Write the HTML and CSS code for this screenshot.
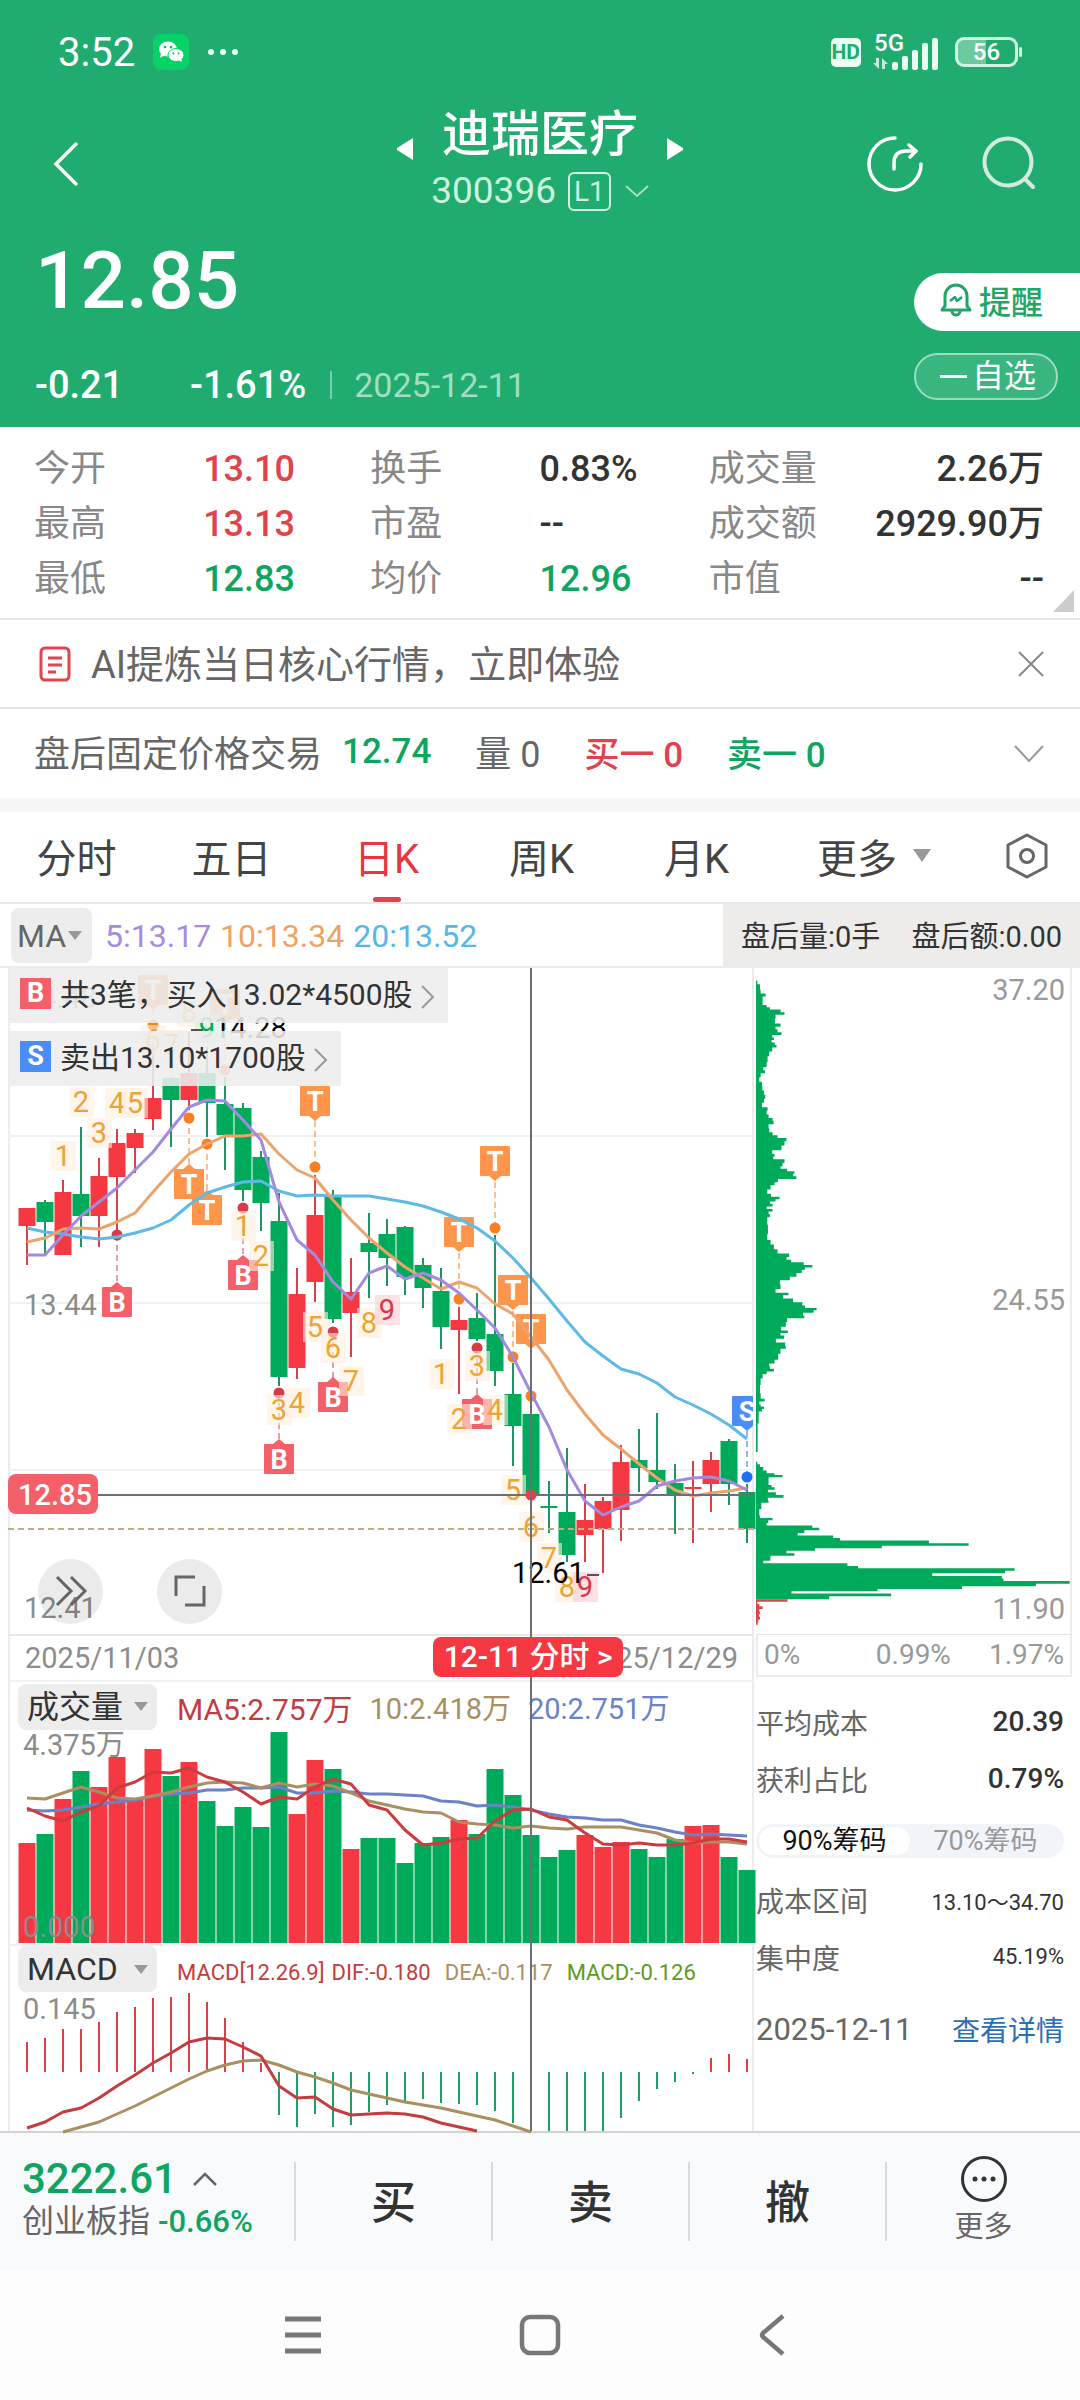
FILE: index.html
```
<!DOCTYPE html>
<html lang="zh-CN">
<head>
    <meta charset="UTF-8" />
    <meta name="viewport" content="width=device-width, initial-scale=1.0" />
    <title>迪瑞医疗 300396</title>
    <link rel="stylesheet" href="styles.css">
</head>
<body>
    <header class="top">
        <div class="status">
            <span class="clock">3:52</span>
            <svg class="wechat" width="36" height="36" viewBox="0 0 36 36">
                <rect width="36" height="36" rx="8" fill="#07d267"/>
                <ellipse cx="15" cy="15" rx="9" ry="7.500" fill="#fff"/>
                <path d="M8 19l-1 5 5-3z" fill="#fff"/>
                <ellipse cx="23" cy="21" rx="8" ry="6.500" fill="#fff" stroke="#07d267"/>
                <path d="M25 26l4 2-1-4z" fill="#fff"/>
                <g fill="#07c15f"><circle cx="12" cy="13" r="1.300"/><circle cx="18" cy="13" r="1.300"/><circle cx="20.500" cy="19.500" r="1"/><circle cx="25.500" cy="19.500" r="1"/></g>
            </svg>
            <svg width="34" height="8" viewBox="0 0 34 8" fill="#e8fff2"><circle cx="4" cy="4" r="3"/><circle cx="16" cy="4" r="3"/><circle cx="28" cy="4" r="3"/></svg>
            <span class="hd">HD</span>
            <div class="signal">
                <span>5G</span>
                <svg width="68" height="36" viewBox="0 0 68 36" fill="#e8fff2">
                    <path d="M3 24h3v11L0 29h3zM9 35V24l6 6h-3v5z" opacity=".8"/>
                    <rect x="19" y="28" width="6" height="8" rx="2"/><rect x="29" y="22" width="6" height="14" rx="2"/><rect x="39" y="16" width="6" height="20" rx="2"/><rect x="49" y="9" width="6" height="27" rx="2"/><rect x="59" y="4" width="6" height="32" rx="2"/>
                </svg>
            </div>
            <span class="battery">56</span>
        </div>

        <div class="title-bar">
            <button class="icon-btn back" aria-label="返回">
                <svg width="26" height="44" viewBox="0 0 26 44"><path d="M24 2L4 22l20 20" fill="none" stroke="#fff" stroke-width="3.500" stroke-linecap="round"/></svg>
            </button>
            <div class="stock">
                <button class="icon-btn" aria-label="上一只"><svg width="18" height="24" viewBox="0 0 18 24"><path d="M17 1v22L1 13v-2z" fill="#fff"/></svg></button>
                <div class="stock-name">
                    <h1>迪瑞医疗</h1>
                    <p>300396 <span class="level">L1</span>
                        <svg width="24" height="12" viewBox="0 0 24 12"><path d="M1 1l11 10L23 1" fill="none" stroke="#a6dfc2" stroke-width="2"/></svg>
                    </p>
                </div>
                <button class="icon-btn" aria-label="下一只"><svg width="18" height="24" viewBox="0 0 18 24"><path d="M1 1v22l16-10v-2z" fill="#fff"/></svg></button>
            </div>
            <div class="tools">
                <button class="icon-btn" aria-label="分享">
                    <svg width="56" height="56" viewBox="0 0 56 56" fill="none" stroke="#fff" stroke-width="3.500" stroke-linecap="round" stroke-linejoin="round"><path d="M27 2A26 26 0 1 0 53 28"/><path d="M26 33V27c0-8 4-12 12-12h10"/><path d="M41 9l7 6-6 6"/></svg>
                </button>
                <button class="icon-btn" aria-label="搜索">
                    <svg width="54" height="54" viewBox="0 0 54 54" fill="none" stroke="#d3ebdd" stroke-width="4" stroke-linecap="round"><circle cx="26" cy="26" r="23.500"/><path d="M43 43l8 8"/></svg>
                </button>
            </div>
        </div>

        <div class="quote">
            <div>
                <div class="price">12.85</div>
                <div class="change">
                    <span class="diff">-0.21</span>
                    <span class="pct">-1.61%</span>
                    <span class="day">2025-12-11</span>
                </div>
            </div>
            <div class="quote-btns">
                <button class="remind">
                    <svg width="32" height="34" viewBox="0 0 32 34" fill="none" stroke="#21a669" stroke-width="3" stroke-linejoin="round"><path d="M2 27h28l-3-4V13a11 11 0 0 0-22 0v10z"/><path d="M10 18l5-4 2 4 5-4" stroke-width="2.500"/><path d="M12 28a4 4 0 0 0 8 0" /></svg>提醒
                </button>
                <button class="watch"><i></i>自选</button>
            </div>
        </div>
    </header>

    <dl class="stats">
        <dt>今开</dt><dd class="red">13.10</dd><dt>换手</dt><dd>0.83%</dd><dt>成交量</dt><dd class="end">2.26万</dd>
        <dt>最高</dt><dd class="red">13.13</dd><dt>市盈</dt><dd>--</dd><dt>成交额</dt><dd class="end">2929.90万</dd>
        <dt>最低</dt><dd class="green">12.83</dd><dt>均价</dt><dd class="green">12.96</dd><dt>市值</dt><dd class="end">--</dd>
    </dl>

    <div class="ai-row">
        <svg width="32" height="36" viewBox="0 0 32 36" fill="none" stroke="#e0444e" stroke-width="3"><rect x="2" y="2" width="28" height="32" rx="4"/><path d="M9 12h14M9 19h14M9 26h8"/></svg>
        <span>AI提炼当日核心行情，立即体验</span>
        <button class="icon-btn" aria-label="关闭"><svg width="26" height="26" viewBox="0 0 26 26"><path d="M1 1l24 24M25 1L1 25" stroke="#888" stroke-width="2"/></svg></button>
    </div>

    <div class="fixed-row">
        <span>盘后固定价格交易</span>
        <b class="green">12.74</b>
        <span class="vol">量 0</span>
        <b class="red">买一 0</b>
        <b class="green">卖一 0</b>
        <button class="icon-btn" aria-label="展开"><svg width="30" height="18" viewBox="0 0 30 18"><path d="M1 1l14 15L29 1" fill="none" stroke="#999" stroke-width="2"/></svg></button>
    </div>

    <nav class="tabs">
        <button>分时</button>
        <button>五日</button>
        <button class="active">日K</button>
        <button>周K</button>
        <button>月K</button>
        <button class="more">更多<i class="caret"></i></button>
        <button class="setting" aria-label="设置">
            <svg width="42" height="46" viewBox="0 0 42 46" fill="none" stroke="#666" stroke-width="3" stroke-linejoin="round"><path d="M21 2l19 10v22L21 44 2 34V12z"/><circle cx="21" cy="23" r="6.500"/></svg>
        </button>
    </nav>

    <div class="ma-row">
        <button class="pick ma-pick">MA<i class="caret small"></i></button>
        <span class="ma5">5:13.17</span>
        <span class="ma10">10:13.34</span>
        <span class="ma20">20:13.52</span>
        <div class="after"><span>盘后量:0手</span><span>盘后额:0.00</span></div>
    </div>

    <main class="charts">
        <section class="left">
            <div class="kline">
                <svg id="kline" viewBox="8 968 746 712"></svg>
                <div class="trades">
                    <a href="#buy"><i class="tag b">B</i>共3笔，买入13.02*4500股<svg width="14" height="24" viewBox="0 0 14 24"><path d="M1 1l11 11L1 23" fill="none" stroke="#999" stroke-width="2"/></svg></a>
                    <a href="#sell"><i class="tag s">S</i>卖出13.10*1700股<svg width="14" height="24" viewBox="0 0 14 24"><path d="M1 1l11 11L1 23" fill="none" stroke="#999" stroke-width="2"/></svg></a>
                </div>
                <button class="round forward" aria-label="快进"><svg width="32" height="32" viewBox="0 0 32 32"><path d="M3 2l14 14L3 30M17 2l14 14-14 14" fill="none" stroke="#666" stroke-width="3"/></svg></button>
                <button class="round expand" aria-label="全屏"><svg width="32" height="32" viewBox="0 0 32 32"><path d="M2 21V2h19M30 11v19H11" fill="none" stroke="#666" stroke-width="3"/></svg></button>
                <button class="time-pill">12-11 分时 &gt;</button>
            </div>
            <div class="sub-head">
                <button class="pick">成交量<i class="caret small"></i></button>
                <p class="vol-ma"><span>MA5:2.757万</span><span>10:2.418万</span><span>20:2.751万</span></p>
            </div>
            <svg id="volume" viewBox="8 1731 746 213"></svg>
            <div class="sub-head macd-head">
                <button class="pick">MACD<i class="caret small"></i></button>
                <p class="macd-val"><span>MACD[12.26.9]</span><span>DIF:-0.180</span><span>DEA:-0.117</span><span>MACD:-0.126</span></p>
            </div>
            <svg id="macd" viewBox="8 1992 746 139"></svg>
            <div class="crosshair"></div>
        </section>

        <aside class="right">
            <div class="chip">
                <svg id="chip" viewBox="48 15 948 1433" preserveAspectRatio="none"></svg>
                <div class="chip-y"><span>37.20</span><span>24.55</span><span>11.90</span></div>
            </div>
            <div class="chip-x"><span>0%</span><span>0.99%</span><span>1.97%</span></div>
            <div class="cost">
                <p>平均成本<b>20.39</b></p>
                <p>获利占比<b>0.79%</b></p>
                <div class="switch"><button class="on">90%筹码</button><button>70%筹码</button></div>
                <p>成本区间<b class="sm">13.10～34.70</b></p>
                <p>集中度<b class="sm">45.19%</b></p>
                <p class="last">2025-12-11<a href="#detail">查看详情</a></p>
            </div>
        </aside>
    </main>

    <footer class="bottom">
        <div class="index">
            <p class="idx-val">3222.61<svg width="24" height="14" viewBox="0 0 24 14"><path d="M1 13L12 2l11 11" fill="none" stroke="#666" stroke-width="2.500"/></svg></p>
            <p class="idx-name">创业板指 <b>-0.66%</b></p>
        </div>
        <button class="act">买</button>
        <button class="act">卖</button>
        <button class="act">撤</button>
        <button class="act more-act">
            <svg width="48" height="48" viewBox="0 0 48 48"><circle cx="24" cy="24" r="21.500" fill="none" stroke="#333" stroke-width="3"/><g fill="#333"><circle cx="15" cy="24" r="2.500"/><circle cx="24" cy="24" r="2.500"/><circle cx="33" cy="24" r="2.500"/></g></svg>
            更多
        </button>
    </footer>

    <div class="sysnav">
        <button class="icon-btn" aria-label="菜单"><svg width="40" height="44" viewBox="0 0 40 44"><path d="M2 6h36M2 22h36M2 38h36" stroke="#777" stroke-width="5"/></svg></button>
        <button class="icon-btn" aria-label="主页"><svg width="42" height="44" viewBox="0 0 42 44"><rect x="3" y="4" width="36" height="36" rx="8" fill="none" stroke="#777" stroke-width="4.500"/></svg></button>
        <button class="icon-btn" aria-label="返回"><svg width="30" height="44" viewBox="0 0 30 44"><path d="M26 3L6 20q-2 2 0 4l20 17" fill="none" stroke="#777" stroke-width="4.500"/></svg></button>
    </div>

    <script src="charts.js"></script>
</body>
</html>
```
FILE: styles.css
```
* {
    box-sizing: border-box;
}
body, h1, p, dl, dd {
    margin: 0;
}
body {
    font-family: Roboto, "Noto Sans CJK SC", sans-serif;
    background-color: #fff;
    color: #333;
    font-size: 36px;
}
button {
    font-family: inherit;
    color: inherit;
    border: 0;
    background: none;
    padding: 0;
    cursor: pointer;
}
svg {
    display: block;
    flex-shrink: 0;
    overflow: visible;
}
b {
    font-weight: 500;
}
i {
    font-style: normal;
}
.icon-btn {
    display: flex;
}
.red {
    color: #e0434d;
}
.green {
    color: #0da560;
}
.caret {
    border: 9px solid transparent;
    border-top: 13px solid #999;
    border-bottom: 0;
    margin-left: 16px;
}
.caret.small {
    border-width: 9px 7px 0;
    margin-left: 4px;
}

/* header */
.top {
    background-color: #21ac6f;
    color: #fff;
    height: 427px;
}
.status {
    display: flex;
    align-items: center;
    gap: 18px;
    height: 104px;
    padding: 0 62px 0 58px;
}
.clock {
    font-size: 40px;
}
.hd {
    margin-left: auto;
    background-color: #e8fff2;
    color: #21ac6f;
    font-size: 21px;
    font-weight: 700;
    line-height: 29px;
    padding: 0 1px;
    border-radius: 5px;
}
.signal {
    position: relative;
    margin-right: -4px;
    margin-left: -6px;
}
.signal span {
    position: absolute;
    top: -3px;
    left: 1px;
    font-size: 24px;
    line-height: 24px;
    font-weight: 500;
}
.battery {
    position: relative;
    width: 63px;
    height: 30px;
    border: 3px solid #d3f3e1;
    border-radius: 9px;
    background: linear-gradient(90deg, #6dc99e 50%, #21ac6f 50%);
    font-size: 24px;
    line-height: 25px;
    text-align: center;
    font-weight: 500;
}
.battery::after {
    content: "";
    position: absolute;
    top: 7px;
    right: -7px;
    width: 3px;
    height: 10px;
    border-radius: 2px;
    background-color: #d3f3e1;
}
.title-bar {
    display: grid;
    grid-template-columns: 1fr auto 1fr;
    align-items: center;
    height: 120px;
    padding: 0 44px;
}
.back {
    padding-left: 8px;
}
.stock {
    display: flex;
    align-items: center;
    gap: 28px;
    padding-bottom: 6px;
}
.stock > .icon-btn {
    padding-bottom: 24px;
}
.stock-name {
    width: 196px;
    display: flex;
    flex-direction: column;
    align-items: center;
}
.stock-name h1 {
    font-size: 49px;
    font-weight: 500;
    line-height: 60px;
    white-space: nowrap;
}
.stock-name p {
    display: flex;
    align-items: center;
    gap: 12px;
    font-size: 37px;
    line-height: 52px;
    color: #cdf3df;
}
.level {
    border: 2px solid #cdf3df;
    border-radius: 6px;
    font-size: 28px;
    line-height: 35px;
    padding: 0 4px;
}
.stock-name p svg {
    margin-left: 2px;
}
.tools {
    display: flex;
    justify-content: flex-end;
    gap: 58px;
}
.quote {
    display: flex;
    justify-content: space-between;
    padding-left: 35px;
}
.price {
    font-size: 80px;
    font-weight: 500;
    line-height: 114px;
}
.change {
    display: flex;
    align-items: center;
    font-size: 38px;
    font-weight: 500;
    line-height: 60px;
    padding-top: 17px;
}
.diff {
    width: 155px;
}
.pct {
    padding-right: 24px;
    line-height: 28px;
    border-right: 2px solid rgba(255, 255, 255, .4);
}
.day {
    padding-left: 22px;
    font-size: 34px;
    font-weight: 400;
    color: #a0dfc0;
}
.quote-btns {
    padding-top: 49px;
    width: 166px;
}
.remind {
    display: flex;
    align-items: center;
    gap: 7px;
    width: 100%;
    height: 58px;
    padding: 0 0 4px 26px;
    border-radius: 29px 0 0 29px;
    background-color: #fff;
    color: #21a669;
    font-size: 32px;
    font-weight: 500;
}
.watch {
    display: flex;
    align-items: center;
    gap: 5px;
    width: 144px;
    height: 47px;
    margin-top: 22px;
    padding-left: 24px;
    border: 2px solid #9fdcbd;
    border-radius: 24px;
    background-color: #39b57e;
    color: #fff;
    font-size: 32px;
    line-height: 41px;
}
.watch i {
    width: 27px;
    height: 3px;
    background-color: #fff;
}

/* numbers */
.stats {
    position: relative;
    display: grid;
    grid-template-columns: 169fr 167fr 169fr 169fr 120fr 215fr;
    line-height: 55px;
    padding: 15px 36px 11px 34px;
    border-bottom: 2px solid #e8e8e8;
}
.stats dt {
    color: #888;
}
.stats dd {
    font-weight: 500;
}
.stats .end {
    text-align: right;
}
.stats::after {
    content: "";
    position: absolute;
    right: 6px;
    bottom: 6px;
    border-left: 21px solid transparent;
    border-bottom: 22px solid #ccc;
}
.ai-row, .fixed-row {
    display: flex;
    align-items: center;
    height: 89px;
    padding: 0 36px 0 34px;
    color: #666;
}
.ai-row span, .fixed-row span, .fixed-row b {
    padding-bottom: 5px;
}
.ai-row {
    font-size: 38px;
    gap: 20px;
    padding-left: 39px;
    border-bottom: 2px solid #e4e4e4;
}
.ai-row .icon-btn, .fixed-row .icon-btn {
    margin-left: auto;
}
.fixed-row {
    gap: 20px;
}
.fixed-row b {
    font-size: 35px;
}
.fixed-row .vol {
    margin-left: 24px;
}
.fixed-row .vol + .red, .fixed-row .red + .green {
    margin-left: 24px;
}

/* period tabs */
.tabs {
    display: grid;
    grid-template-columns: repeat(5, 155fr) 200fr 105fr;
    height: 106px;
    border-top: 14px solid #f7f7f7;
    border-bottom: 2px solid #e8e8e8;
}
.tabs button {
    display: flex;
    align-items: center;
    justify-content: center;
    position: relative;
    padding: 0 2px 3px 0;
    font-size: 40px;
    color: #444;
}
.tabs .active {
    color: #e8353f;
}
.tabs .active::after {
    content: "";
    position: absolute;
    bottom: 0;
    width: 28px;
    height: 5px;
    border-radius: 3px;
    background-color: #e0434d;
}
.ma-row {
    display: flex;
    align-items: center;
    gap: 9px;
    height: 63px;
    padding-left: 11px;
    font-size: 32px;
}
.pick {
    display: flex;
    align-items: center;
    background-color: #ededed;
    border-radius: 8px;
    font-size: 32px;
    line-height: 46px;
    height: 46px;
    padding: 0 9px;
}
.pick .caret {
    margin-left: 10px;
}
.ma-pick {
    width: 81px;
    height: 55px;
    margin-right: 4px;
    padding: 0 7px 0 6px;
    color: #666;
}
.ma-pick .caret {
    margin-left: 2px;
}
.ma5 {
    color: #a78be0;
}
.ma10 {
    color: #eda268;
}
.ma20 {
    color: #5ab6e4;
}
.after {
    display: flex;
    align-items: center;
    justify-content: space-between;
    align-self: stretch;
    width: 357px;
    margin-left: auto;
    padding: 0 18px 4px;
    background-color: #edeceb;
    font-size: 29px;
}

/* charts */
.charts {
    display: grid;
    grid-template-columns: 746fr 326fr;
    padding-left: 8px;
    border-top: 2px solid #ececec;
    margin-top: -1px;
}
.left {
    position: relative;
    box-shadow: inset 2px 0 #ececec, inset -2px 0 #ececec;
}
#kline, #volume, #macd {
    width: 100%;
}
#kline text, #volume text, #macd text {
    font-size: 29px;
}
#kline .flag {
    font-size: 27px;
    font-weight: 700;
    fill: #fff;
}
.axis {
    fill: #8c8c8c;
}
.kline {
    position: relative;
}
.trades {
    position: absolute;
    top: 0;
    left: 0;
    display: flex;
    flex-direction: column;
    align-items: flex-start;
    gap: 8px;
}
.trades a {
    display: flex;
    align-items: center;
    height: 55px;
    padding: 0 13px 8px 12px;
    background-color: rgba(237, 237, 237, .88);
    color: #333;
    font-size: 30px;
    text-decoration: none;
}
.trades svg {
    margin: 10px 0 0 8px;
}
.tag {
    width: 31px;
    height: 31px;
    margin-top: 4px;
    margin-right: 9px;
    color: #fff;
    font-size: 27px;
    font-weight: 700;
    line-height: 31px;
    text-align: center;
}
.tag.b {
    background-color: #f4606a;
}
.tag.s {
    background-color: #4b8df8;
}
.round {
    position: absolute;
    top: 83%;
    display: flex;
    align-items: center;
    justify-content: center;
    width: 65px;
    height: 65px;
    border-radius: 50%;
    background-color: rgba(0, 0, 0, .08);
}
.forward {
    left: 4%;
}
.expand {
    left: 20%;
}
.time-pill {
    position: absolute;
    z-index: 2;
    left: 57%;
    bottom: 3px;
    width: 190px;
    height: 40px;
    border-radius: 8px;
    background-color: #f53842;
    color: #fff;
    font-size: 30px;
    font-weight: 500;
    line-height: 40px;
    white-space: nowrap;
}
.crosshair {
    position: absolute;
    top: 0;
    bottom: 0;
    left: 70%;
    width: 2px;
    background-color: #6b6f76;
}
.sub-head {
    display: flex;
    align-items: center;
    gap: 20px;
    height: 51px;
    padding-left: 10px;
    border-top: 2px solid #f1f1f1;
}
.sub-head .pick {
    width: 139px;
    white-space: nowrap;
}
.sub-head .caret {
    margin-left: auto;
}
.macd-head {
    height: 48px;
}
.vol-ma {
    display: flex;
    gap: 17px;
    font-size: 30px;
    color: #c43c3f;
}
.vol-ma span + span {
    color: #a98f61;
    font-size: 29px;
}
.vol-ma span + span + span {
    color: #6a82c8;
}
.macd-val {
    display: flex;
    gap: 14px;
    font-size: 22px;
    color: #c43c3f;
    padding-top: 6px;
}
.macd-val span:nth-child(2) {
    margin-left: -7px;
}
.macd-val span:nth-child(3) {
    color: #a98f61;
}
.macd-val span:nth-child(4) {
    color: #5d9a22;
}

/* chip distribution */
.right {
    padding: 0 8px 0 2px;
}
.chip {
    position: relative;
    border-right: 2px solid #ececec;
    border-bottom: 1px solid #e6e6e6;
}
#chip {
    width: 100%;
    aspect-ratio: 314 / 666;
}
.chip-y {
    position: absolute;
    inset: 5px 5px 8px auto;
    display: flex;
    flex-direction: column;
    justify-content: space-between;
    font-size: 29px;
    line-height: 34px;
    color: #999;
}
.chip-x {
    display: flex;
    justify-content: flex-end;
    gap: 38px;
    padding: 0 6px;
    font-size: 28px;
    line-height: 40px;
    color: #999;
    border: 2px solid #ececec;
    border-top: 0;
}
.chip-x span:first-child {
    margin-right: auto;
}
.cost {
    font-size: 28px;
    padding: 16px 8px 0 0;
}
.cost p {
    display: flex;
    align-items: center;
    justify-content: space-between;
    height: 57px;
    color: #666;
}
.cost b {
    color: #333;
}
.cost .sm {
    font-size: 22px;
    font-weight: 400;
}
.cost .last {
    height: 88px;
    font-size: 31px;
}
.cost a {
    color: #2a6fb8;
    font-size: 28px;
    text-decoration: none;
}
.switch {
    display: flex;
    height: 34px;
    margin: 17px 0 13px;
    border-radius: 17px;
    background-color: #f1f5fa;
    padding: 3px;
}
.switch button {
    flex: 1;
    font-size: 27px;
    line-height: 28px;
    color: #999;
}
.switch .on {
    color: #111;
    background-color: #fff;
    border-radius: 14px;
}

/* bottom bars */
.bottom {
    display: grid;
    grid-template-columns: 294fr 197fr 197fr 197fr 195fr;
    align-items: center;
    height: 139px;
    border-top: 2px solid #d2d2d4;
    background-color: #f9fafc;
}
.index {
    padding: 0 0 4px 22px;
}
.idx-val {
    display: flex;
    align-items: center;
    gap: 16px;
    font-size: 42px;
    font-weight: 500;
    line-height: 44px;
    color: #0da560;
}
.idx-name {
    font-size: 32px;
    line-height: 40px;
    color: #666;
    white-space: nowrap;
}
.idx-name b {
    font-size: 31px;
    color: #0da560;
}
.act {
    height: 79px;
    padding-bottom: 4px;
    border-left: 2px solid #d9dadc;
    font-size: 45px;
    font-weight: 500;
}
.more-act {
    display: flex;
    flex-direction: column;
    align-items: center;
    justify-content: center;
    gap: 6px;
    font-size: 29px;
    font-weight: 400;
    line-height: 36px;
    color: #666;
}
.sysnav {
    display: flex;
    align-items: center;
    justify-content: center;
    gap: 196px;
    height: 130px;
    padding-right: 10px;
    background-color: #fdfdfd;
}
```
FILE: charts.js
```
const RED = '#f53842';
const GREEN = '#00aa5b';
const STEP = 18;

const xAt = i => 27 + i * STEP;

// [color, high, body top, body bottom, low]
const candles = [
    ['r',1208,1208,1226,1265], ['g',1200,1202,1222,1256], ['r',1180,1192,1255,1255], ['g',1127,1194,1216,1247],
    ['r',1158,1176,1216,1247], ['r',1129,1143,1177,1235], ['r',1129,1133,1148,1173], ['r',1043,1098,1119,1130],
    ['g',1077,1078,1100,1147], ['r',1032,1073,1100,1110], ['g',1047,1073,1103,1137], ['g',1077,1104,1135,1170],
    ['g',1103,1108,1190,1201], ['g',1151,1157,1203,1231], ['g',1193,1221,1377,1386], ['r',1268,1294,1368,1379],
    ['r',1175,1215,1282,1302], ['g',1190,1195,1319,1323], ['r',1258,1292,1313,1357], ['g',1213,1243,1252,1298],
    ['g',1219,1234,1258,1286], ['g',1226,1227,1277,1295], ['g',1258,1265,1288,1308], ['g',1268,1291,1327,1349],
    ['r',1307,1320,1330,1394], ['g',1293,1318,1339,1341], ['g',1235,1334,1371,1386], ['g',1363,1394,1426,1466],
    ['g',1414,1414,1494,1494], ['g',1481,1506,1508,1533], ['g',1448,1512,1555,1562], ['r',1484,1520,1535,1562],
    ['r',1497,1501,1529,1573], ['r',1445,1462,1510,1541], ['g',1429,1460,1468,1492], ['g',1413,1470,1482,1489],
    ['g',1464,1483,1495,1534], ['r',1461,1487,1489,1543], ['r',1452,1460,1484,1512], ['g',1439,1441,1484,1505],
    ['g',1484,1492,1529,1543]
];
const ma5 = [1255,1255,1235,1216,1202,1188,1170,1152,1129,1107,1100,1101,1120,1140,1202,1240,1255,1282,1299,1273,1266,1279,1273,1280,1293,1310,1328,1357,1393,1427,1470,1501,1515,1507,1501,1486,1481,1478,1477,1481,1490];
const ma10 = [1242,1238,1229,1228,1229,1222,1213,1192,1172,1154,1144,1136,1136,1134,1154,1170,1178,1200,1220,1238,1253,1267,1278,1289,1282,1288,1304,1314,1337,1360,1390,1414,1435,1449,1464,1478,1490,1496,1493,1491,1488];
const ma20 = [1228,1232,1234,1237,1239,1237,1233,1228,1220,1205,1193,1187,1182,1181,1191,1196,1195,1196,1196,1196,1199,1202,1206,1212,1219,1228,1241,1258,1278,1299,1321,1342,1356,1369,1374,1383,1397,1405,1414,1425,1439];

// [column, digit, top, style]
const counts = [
    [2,1,1141], [3,2,1087], [4,3,1118], [5,4,1088], [6,5,1088], [7,6,1025], [8,7,1030], [9,8,997], [10,9,1013,'g'],
    [12,1,1211], [13,2,1241], [14,3,1395], [15,4,1388], [16,5,1312], [17,6,1333], [18,7,1366], [19,8,1308], [20,9,1295,'p'],
    [23,1,1359], [24,2,1404], [25,3,1351], [26,4,1395], [27,5,1475], [28,6,1512], [29,7,1543], [30,8,1572], [31,9,1572,'p']
];
// [letter, column, badge top, dot y]
const flags = [
    ['T',7,975,1025], ['T',11,989,1070], ['T',16,1086,1167], ['T',26,1146,1228], ['T',24,1217,1299], ['T',27,1275,1357], ['T',28,1314,1396],
    ['T',9,1169,1118], ['T',10,1195,1144],
    ['B',5,1287,1235], ['B',12,1260,1208], ['B',14,1444,1393], ['B',17,1382,1332], ['B',25,1399,1348],
    ['S',40,1396,1477]
];
const flagColor = { T: ['#fd964a','#f97f20'], B: ['#f4606a','#d93a48'], S: ['#4b8df8','#1f6ff0'] };
const countColor = { y: ['#ffeedd','#eba437'], g: ['#c8f0da','#00aa5b'], p: ['#fccdd2','#dd3546'] };

const volumes = [1843,1834,1799,1771,1787,1757,1798,1749,1776,1762,1801,1826,1807,1827,1732,1814,1760,1769,1849,1838,1838,1863,1843,1837,1820,1834,1769,1795,1835,1857,1850,1835,1847,1842,1849,1857,1839,1826,1825,1857,1870];
const vol5 = [1808,1816,1821,1812,1806,1788,1782,1772,1773,1768,1777,1782,1792,1804,1797,1799,1787,1779,1784,1805,1810,1830,1845,1843,1839,1838,1821,1810,1809,1817,1820,1833,1844,1845,1843,1845,1845,1843,1839,1839,1842];
const vol10 = [1798,1799,1793,1787,1792,1798,1799,1796,1792,1787,1783,1782,1783,1788,1783,1787,1784,1786,1793,1801,1805,1809,1812,1813,1822,1824,1825,1828,1826,1828,1829,1827,1827,1827,1830,1833,1840,1843,1842,1842,1844];
const vol20 = [1810,1811,1810,1807,1804,1802,1800,1796,1794,1793,1790,1790,1788,1788,1787,1793,1793,1791,1792,1794,1794,1795,1796,1801,1802,1806,1805,1807,1810,1814,1817,1818,1820,1820,1825,1828,1832,1835,1834,1835,1836];

// bars that fall under the panel are cut at 2131
const macdBars = [2042,2038,2029,2029,2022,2012,2007,1998,1997,1993,2002,2018,2042,2063,2115,2127,2114,2127,2125,2112,2105,2102,2099,2103,2104,2105,2111,2123,2131,2131,2131,2131,2131,2118,2101,2089,2082,2074,2058,2054,2059];
const dif = [2128,2122,2112,2108,2098,2086,2075,2063,2053,2042,2038,2039,2047,2056,2086,2098,2097,2109,2115,2114,2113,2114,2117,2123,2127,2131];
const dea = [2142,2138,2132,2127,2122,2114,2106,2097,2088,2079,2071,2065,2061,2060,2065,2072,2077,2083,2090,2094,2098,2102,2105,2108,2112,2116,2120,2126,2132];

// price level and bar end
const chips = [
    [45,52],[55,60],[67,62],[73,77],[80,68],[92,68],[97,80],[102,90],[107,122],[113,134],[118,107],[130,105],[139,122],[144,107],[150,113],[156,125],[162,97],[167,102],[173,95],[178,105],[183,110],[189,97],[200,88],[210,83],[225,80],[232,70],[238,75],[245,62],[255,58],[265,66],[275,67],[282,72],[293,76],[300,72],[310,66],[319,83],[325,80],[335,86],[340,98],[347,101],[355,86],[365,88],[372,98],[378,113],[384,140],[392,134],[402,125],[412,97],[418,104],[424,100],[429,134],[440,128],[444,122],[450,142],[455,164],[460,160],[466,170],[472,114],[480,104],[485,92],[498,82],[504,93],[510,119],[515,107],[520,90],[525,98],[531,80],[536,98],[542,86],[548,90],[555,82],[580,84],[595,82],[605,92],[615,102],[625,113],[634,148],[640,140],[645,154],[651,192],[657,218],[662,196],[667,186],[675,170],[684,150],[690,120],[700,122],[711,107],[716,146],[722,130],[730,160],[738,188],[744,196],[749,231],[754,222],[760,190],[766,194],[771,142],[782,138],[792,124],[798,144],[803,122],[808,133],[817,108],[825,136],[831,138],[837,122],[853,115],[863,104],[869,88],[875,90],[880,102],[886,80],[892,68],[905,62],[920,60],[939,62],[945,74],[951,58],[956,62],[961,72],[967,66],[972,56],[990,56],[1000,53],[1055,53],[1058,48],[1075,48],
    [1080,52],[1085,60],[1092,70],[1100,80],[1104,104],[1108,128],[1113,86],[1125,86],[1130,95],[1135,104],[1140,84],[1146,108],[1152,131],[1158,84],[1163,86],[1168,64],[1190,58],[1196,60],[1201,98],[1206,85],[1212,80],[1217,218],[1222,239],[1228,194],[1233,174],[1239,281],[1244,302],[1250,570],[1255,690],[1261,428],[1266,226],[1272,140],[1277,164],[1282,92],[1288,91],[1293,70],[1299,324],[1304,356],[1309,829],[1315,800],[1320,580],[1326,790],[1331,795],[1337,995],[1343,893],[1348,670],[1354,415],[1358,155],[1364,456],[1370,269]
];
const chipsRed = [[1376,143],[1381,52],[1386,58],[1391,68],[1397,58],[1403,60],[1408,57],[1414,60],[1420,55],[1425,53]];

const line = (ys, color, from = 0) =>
    `<polyline points="${ys.slice(from).map((y, i) => xAt(i + from) + ',' + y).join(' ')}" fill="none" stroke="${color}" stroke-width="3" stroke-linejoin="round"/>`;
const rule = (y, color = '#f1f1f1') => `<path d="M8 ${y}H754" stroke="${color}" stroke-width="2"/>`;
const label = (x, y, text, extra = 'class="axis"') => `<text x="${x}" y="${y}" ${extra}>${text}</text>`;

function drawCandle([c, high, top, bottom, low], i) {
    const x = xAt(i);
    return `<path d="M${x} ${high}V${low}" stroke="${c === 'r' ? '#d9404a' : '#219463'}" stroke-width="2"/>
        <rect x="${x - 8.5}" y="${top}" width="17" height="${bottom - top}" fill="${c === 'r' ? RED : GREEN}"/>`;
}

function drawCount([i, n, top, style = 'y']) {
    const [bg, fg] = countColor[style];
    return `<rect x="${xAt(i) - 12}" y="${top}" width="25" height="30" fill="${bg}" opacity=".6"/>
        <text x="${xAt(i)}" y="${top + 25}" fill="${fg}" text-anchor="middle">${n}</text>`;
}

function drawFlag([letter, i, top, dot]) {
    const x = xAt(i);
    const [bg, point] = flagColor[letter];
    const below = dot < top;
    const tip = below ? `M${x - 6} ${top}l6 -5l6 5z` : `M${x - 6} ${top + 30}l6 5l6 -5z`;
    // the last column has less room before the frame
    const right = Math.min(x + 15, 753);
    return `<path d="M${x} ${dot}V${below ? top : top + 30}" stroke="${point}" stroke-dasharray="6 4"/>
        <circle cx="${x}" cy="${dot}" r="5.500" fill="${point}"/>
        <rect x="${x - 15}" y="${top}" width="${right - x + 15}" height="30" rx="1" fill="${bg}"/><path d="${tip}" fill="${bg}"/>
        <text class="flag" x="${x}" y="${top + 25}" text-anchor="middle">${letter}</text>`;
}

function drawChips(rows, color) {
    let d = `M48 ${rows[0][0] - 3}`;
    rows.forEach(([y, x], i) => {
        const next = rows[i + 1] ? (y + rows[i + 1][0]) / 2 : y + 3;
        d += `H${x}V${next}`;
    });
    return `<path d="${d}H48Z" fill="${color}"/>`;
}

document.getElementById('kline').innerHTML =
    rule(1136) + rule(1303) + rule(1470) + rule(1635, '#e8e8e8') +
    label(24, 1008, '14.48') +
    candles.map(drawCandle).join('') +
    flags.map(drawFlag).join('') +
    counts.map(drawCount).join('') +
    line(ma20, '#5fb9e6') + line(ma10, '#eca46c') + line(ma5, '#a48ade') +
    `<path d="M8 1529H754" stroke="#c4ab80" stroke-width="2" stroke-dasharray="6 4"/>` +
    rule(1495, '#6b6f7a') +
    `<circle cx="531" cy="1495" r="5.500" fill="${RED}"/>` +
    `<path d="M191 1030h12M587 1575h12" stroke="#555" stroke-width="2"/>` +
    label(214, 1038, '14.28', 'fill="#000"') +
    label(512, 1583, '12.61', 'fill="#000"') +
    label(24, 1315, '13.44') + label(24, 1618, '12.41') +
    label(25, 1668, '2025/11/03') + label(738, 1668, '2025/12/29', 'class="axis" text-anchor="end"') +
    `<rect x="8" y="1474" width="90" height="40" rx="8" fill="#f4606a"/>` +
    label(18, 1505, '12.85', 'fill="#fff" font-weight="500"');

document.getElementById('volume').innerHTML =
    volumes.map((y, i) => `<rect x="${xAt(i) - 8.5}" y="${y}" width="17" height="${1943 - y}" fill="${candles[i][0] === 'r' ? RED : GREEN}"/>`).join('') +
    line(vol20, '#6a82c8') + line(vol10, '#a98f61') + line(vol5, '#cd3b3e') +
    label(23, 1755, '4.375万') + label(23, 1937, '0.000');

document.getElementById('macd').innerHTML =
    macdBars.map((y, i) => `<path d="M${xAt(i)} 2072V${y}" stroke="${i < 14 || i > 37 ? '#d9404a' : '#1aa163'}" stroke-width="2"/>`).join('') +
    line(dea, '#a98f61', 2) + line(dif, '#c43c3f') +
    label(23, 2019, '0.145');

document.getElementById('chip').innerHTML = drawChips(chips, GREEN) + drawChips(chipsRed, '#e0434d');
```
